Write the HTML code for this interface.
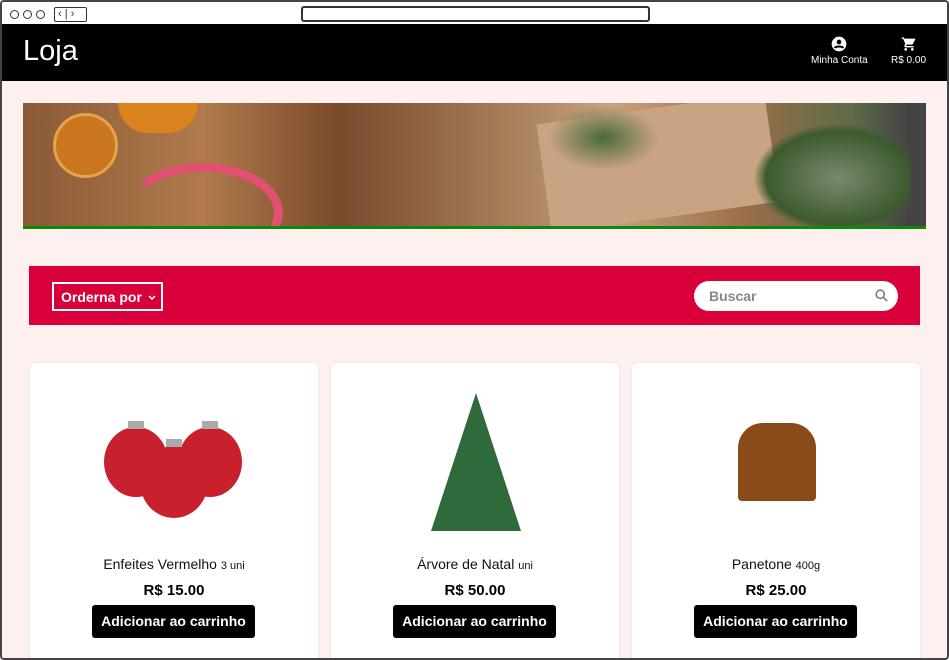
<!DOCTYPE html>
<html><head><meta charset="utf-8"><style>
*{margin:0;padding:0;box-sizing:border-box}
body{width:949px;height:660px;overflow:hidden;font-family:"Liberation Sans",sans-serif;background:#fff}
.frame{position:absolute;left:0;top:0;width:949px;height:660px;border:2px solid #444;border-radius:4px;overflow:hidden;background:#fff0f0}
.top{position:absolute;left:0;top:0;width:100%;height:22px;background:#fff}
.dot{position:absolute;top:8px;width:9px;height:9px;border:1.5px solid #333;border-radius:50%}
.nav{position:absolute;left:52px;top:5px;width:33px;height:15px;border:1.5px solid #333;border-radius:2px;font-size:11px;line-height:12px;color:#333}
.url{position:absolute;left:299px;top:4px;width:349px;height:16px;border:2px solid #333;border-radius:3px}
.hdr{position:absolute;left:0;top:22px;width:100%;height:57px;background:#000;color:#fff}
.logo{position:absolute;left:21px;top:11px;font-size:29px}
.hi{position:absolute;top:12px;font-size:10px;text-align:center}
.banner{position:absolute;left:21px;top:101px;width:903px;height:123px;background:linear-gradient(90deg,#8a5a36 0%,#b07a4c 20%,#7a4a2c 35%,#a8825e 55%,#c9a27e 65%,#9a6e48 80%,#5d6a48 92%,#444 98%);overflow:hidden}
.green{position:absolute;left:21px;top:224px;width:903px;height:3px;background:#0a8a0a}
.bar{position:absolute;left:27px;top:264px;width:891px;height:59px;background:#d8003a}
.sel{position:absolute;left:23px;top:16px;width:111px;height:29px;border:2px solid #fff;color:#fff;font-weight:bold;font-size:14px;padding:5px 0 0 7px;white-space:nowrap}
.srch{position:absolute;left:665px;top:15px;width:204px;height:30px;background:#fff;border-radius:15px;color:#888;font-weight:bold;font-size:14px;padding:7px 0 0 15px}
.card{position:absolute;top:361px;width:288px;height:310px;background:#fff;border-radius:6px;box-shadow:0 0 3px rgba(0,0,0,.08);text-align:center}
.nm{position:absolute;top:193px;width:100%;font-size:14px;color:#111}
.nm small{font-size:11px}
.pr{position:absolute;top:219px;width:100%;font-size:15px;font-weight:bold}
.btn{position:absolute;left:62px;top:242px;width:163px;height:33px;background:#000;color:#fff;border-radius:3px;font-weight:bold;font-size:14px;line-height:32px}
</style></head><body><div class="frame">
<div class="top"><div class="dot" style="left:8px"></div><div class="dot" style="left:21px"></div><div class="dot" style="left:34px"></div><div class="nav">&nbsp;‹ | ›</div><div class="url"></div></div>
<div class="hdr"><div class="logo">Loja</div>
<div class="hi" style="left:809px"><svg width="16" height="16" viewBox="0 0 24 24"><circle cx="12" cy="12" r="11" fill="#fff"/><circle cx="12" cy="9" r="3.5" fill="#000"/><path d="M5.5 18c2-3 11-3 13 0" stroke="#000" stroke-width="3" fill="none"/></svg><br>Minha Conta</div>
<div class="hi" style="left:889px"><svg width="16" height="16" viewBox="0 0 24 24"><path fill="#fff" d="M7 18a2 2 0 100 4 2 2 0 000-4zM1 2v2h2l3.6 7.6-1.4 2.4c-.6 1.3.4 3 1.8 3h12v-2H7.4l1.1-2h7.5c.8 0 1.4-.4 1.7-1l3.6-6.5A1 1 0 0020.4 4H5.2l-.9-2zm16 16a2 2 0 100 4 2 2 0 000-4z"/></svg><br>R$ 0.00</div></div>
<div class="banner">
<div style="position:absolute;left:30px;top:10px;width:65px;height:65px;border-radius:50%;background:#c9761e;border:3px solid #e8a24a"></div>
<div style="position:absolute;left:95px;top:0;width:80px;height:30px;border-radius:0 0 40px 40px;background:#d9821e"></div>
<div style="position:absolute;left:100px;top:60px;width:160px;height:100px;border:9px solid #e05070;border-radius:50%;border-bottom-color:transparent;border-left-color:transparent"></div>
<div style="position:absolute;left:520px;top:5px;width:230px;height:110px;background:#c8a482;transform:rotate(-8deg)"></div>
<div style="position:absolute;left:730px;top:20px;width:170px;height:110px;background:radial-gradient(#7a8a6a,#3c5a30 60%,transparent 70%)"></div>
<div style="position:absolute;left:520px;top:0;width:120px;height:70px;background:radial-gradient(#4a6a3a,transparent 65%)"></div>
<div style="position:absolute;left:888px;top:0;width:15px;height:123px;background:#444"></div>
</div>
<div class="green"></div>
<div class="bar"><div class="sel">Orderna por<svg style="position:absolute;right:5px;top:11px" width="8" height="6" viewBox="0 0 8 6"><path d="M1 1l3 3 3-3" stroke="#fff" stroke-width="1.5" fill="none"/></svg></div><div class="srch">Buscar<svg style="position:absolute;right:9px;top:7px" width="15" height="15" viewBox="0 0 24 24"><circle cx="10" cy="10" r="6.5" stroke="#777" stroke-width="2.5" fill="none"/><path d="M15 15l6 6" stroke="#777" stroke-width="2.5"/></svg></div></div>
<div class="card" style="left:28px">
<svg style="position:absolute;left:74px;top:44px" width="140" height="112"><g fill="#c8202c"><ellipse cx="32" cy="55" rx="32" ry="35"/><ellipse cx="106" cy="55" rx="32" ry="35"/><ellipse cx="70" cy="75" rx="34" ry="36"/></g><g fill="#aaa"><rect x="24" y="14" width="16" height="8"/><rect x="98" y="14" width="16" height="8"/><rect x="62" y="32" width="16" height="8"/></g></svg>
<div class="nm">Enfeites Vermelho <small>3 uni</small></div><div class="pr">R$ 15.00</div><div class="btn">Adicionar ao carrinho</div></div>
<div class="card" style="left:329px">
<svg style="position:absolute;left:95px;top:30px" width="100" height="140"><polygon points="50,0 95,138 5,138" fill="#2e6a3a"/></svg>
<div class="nm">Árvore de Natal <small>uni</small></div><div class="pr">R$ 50.00</div><div class="btn">Adicionar ao carrinho</div></div>
<div class="card" style="left:630px">
<div style="position:absolute;left:106px;top:60px;width:78px;height:78px;background:#8a4a1a;border-radius:25px 25px 4px 4px"></div>
<div class="nm">Panetone <small>400g</small></div><div class="pr">R$ 25.00</div><div class="btn">Adicionar ao carrinho</div></div>
</div></body></html>
